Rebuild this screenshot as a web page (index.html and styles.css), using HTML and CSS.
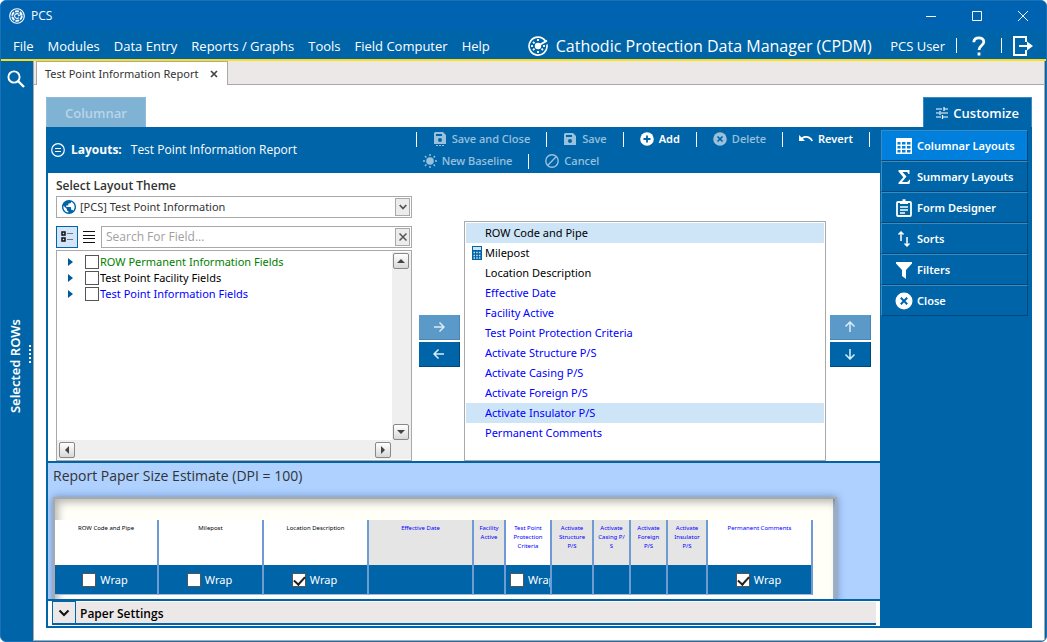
FILE: index.html
```html
<!DOCTYPE html>
<html lang="en">
<head>
  <meta charset="UTF-8">
  <meta name="viewport" content="width=device-width, initial-scale=1.0">
  <title>PCS</title>
  <link rel="stylesheet" href="styles.css">
</head>
<body>
  <div class="window">
    <header class="title-bar">
      <svg class="logo" viewBox="0 0 16 16" width="16" height="16" fill="none" stroke="#fff">
        <circle cx="8" cy="8" r="7.3" stroke-width="1.1"/>
        <circle cx="8" cy="8" r="4.8" stroke-width="1.9" stroke-dasharray="4 1"/>
        <path d="M9.8 6.4a2.4 2.4 0 1 0 0 3.2M9 8l4-2" stroke-width="1.1"/>
      </svg>
      <span class="title">PCS</span>
      <button class="win-btn" aria-label="Minimize"><svg viewBox="0 0 12 12" width="12" height="12" stroke="#fff" fill="none"><path d="M1 6.5h10"/></svg></button>
      <button class="win-btn" aria-label="Maximize"><svg viewBox="0 0 12 12" width="12" height="12" stroke="#fff" fill="none"><path d="M1.5 1.5h9v9h-9z"/></svg></button>
      <button class="win-btn" aria-label="Close window"><svg viewBox="0 0 12 12" width="12" height="12" stroke="#fff" fill="none"><path d="M1 1l10 10M11 1L1 11"/></svg></button>
    </header>

    <nav class="menu-bar">
      <a href="#">File</a>
      <a href="#">Modules</a>
      <a href="#">Data Entry</a>
      <a href="#">Reports / Graphs</a>
      <a href="#">Tools</a>
      <a href="#">Field Computer</a>
      <a href="#">Help</a>
      <div class="product">
        <svg viewBox="0 0 20 20" width="20" height="20" fill="none" stroke="#fff">
          <path d="M17.6 5.2A9 9 0 1 0 18.9 8.5" stroke-width="1.6"/>
          <circle cx="10" cy="10" r="3.2" fill="#fff" stroke="none"/>
          <path d="M11 9.2l8-4.6" stroke-width="1.8"/>
          <path d="M9 4h2M9 16h2M4 9v2M16 9v2M5 5.8l1.5 1.5M5 14.2l1.5-1.5M15 14.2l-1.5-1.5" stroke-width="1.8"/>
        </svg>
        <span>Cathodic Protection Data Manager (CPDM)</span>
      </div>
      <div class="user">
        <span>PCS User</span>
        <i class="bar"></i>
        <button class="icon-btn" aria-label="Help"><svg viewBox="0 0 14 20" width="14" height="20" fill="none" stroke="#fff" stroke-width="2.8"><path d="M1.8 6.2C1.8 3.4 4 1.8 6.8 1.8s5 1.6 5 4.2c0 3.4-4.8 3.8-4.8 8"/><path d="M7 16.6v3"/></svg></button>
        <i class="bar"></i>
        <button class="icon-btn" aria-label="Log out"><svg viewBox="0 0 20 20" width="20" height="20" fill="none" stroke="#fff" stroke-width="2"><path d="M13 6V1H1v18h12v-5"/><path d="M6 10h9"/><path d="M14 5.4v9.2l6-4.6z" fill="#fff" stroke="none"/></svg></button>
      </div>
    </nav>

    <div class="workspace">
      <aside class="rail">
        <button class="icon-btn" aria-label="Search"><svg viewBox="0 0 18 18" width="18" height="18" fill="none" stroke="#fff"><circle cx="7" cy="7" r="5.6" stroke-width="1.9"/><path d="M11 11l6 6" stroke-width="2.4"/></svg></button>
        <div class="rail-title">
          <span class="rail-label">Selected ROWs</span>
          <i class="grip"></i>
        </div>
      </aside>

      <main class="document">
        <div class="doc-tabs">
          <div class="doc-tab">
            <span>Test Point Information Report</span>
            <button class="icon-btn" aria-label="Close tab"><svg viewBox="0 0 8 8" width="8" height="8" fill="none" stroke="#444" stroke-width="1.7"><path d="M1 1l6 6M7 1L1 7"/></svg></button>
          </div>
        </div>

        <div class="page">
          <div class="page-tabs">
            <button class="page-tab" disabled>Columnar</button>
            <button class="page-tab active">
              <svg viewBox="0 0 12 12" width="12" height="12" fill="none" stroke="#fff" stroke-width="1.2"><path d="M0 2h6M8 2h4M8 0v4M0 6h3M5 6h7M4 4v4M0 10h5M7 10h5M6.5 8v4"/></svg>
              Customize
            </button>
          </div>

          <div class="panel">
            <div class="panel-main">
              <div class="toolbar">
                <div class="layout-name">
                  <svg viewBox="0 0 14 14" width="14" height="14" fill="none" stroke="#fff" stroke-width="1.2"><circle cx="7" cy="7" r="6.3"/><path d="M4 5.5h6M4 8.5h6"/></svg>
                  <b>Layouts:</b>
                  <span>Test Point Information Report</span>
                </div>
                <div class="actions">
                  <div class="action-row">
                    <i class="bar"></i>
                    <button disabled><svg viewBox="0 0 14 14" width="14" height="14"><path fill="#fff" fill-rule="evenodd" d="M2 0h8l3 3v9H1V1zM3 2v2h6V2zM7 6a2 2 0 1 0 0 4a2 2 0 1 0 0-4z"/><path stroke="#fff" stroke-dasharray="2 1" d="M3 13.5h8"/></svg>Save and Close</button>
                    <i class="bar"></i>
                    <button disabled><svg viewBox="0 0 14 14" width="14" height="14"><path fill="#fff" fill-rule="evenodd" d="M2 1h8l3 3v9H1V2zM3 3v2h6V3zM7 7a2 2 0 1 0 0 4a2 2 0 1 0 0-4z"/></svg>Save</button>
                    <i class="bar"></i>
                    <button><svg viewBox="0 0 14 14" width="14" height="14"><circle cx="7" cy="7" r="6.8" fill="#fff"/><path d="M7 3.5v7M3.5 7h7" stroke="#0064a8" stroke-width="1.8"/></svg>Add</button>
                    <i class="bar"></i>
                    <button disabled><svg viewBox="0 0 14 14" width="14" height="14"><circle cx="7" cy="7" r="6.8" fill="#fff"/><path d="M4.5 4.5l5 5M9.5 4.5l-5 5" stroke="#0064a8" stroke-width="1.7"/></svg>Delete</button>
                    <i class="bar"></i>
                    <button><svg viewBox="0 0 14 14" width="14" height="14"><path d="M0 3v6h6L3.8 6.8C6.5 4.8 10.5 5.6 12.6 9.5L14 8.5C11.5 4 6.5 2.8 2.7 5.6z" fill="#fff"/></svg>Revert</button>
                    <i class="bar"></i>
                  </div>
                  <div class="action-row second">
                    <button disabled><svg viewBox="0 0 14 14" width="14" height="14"><circle cx="7" cy="7" r="3.8" fill="#fff"/><path d="M7 0v2M7 12v2M0 7h2M12 7h2M2 2l1.4 1.4M10.6 10.6L12 12M12 2l-1.4 1.4M3.4 10.6L2 12" stroke="#fff" stroke-width="1.4"/></svg>New Baseline</button>
                    <i class="bar"></i>
                    <button disabled><svg viewBox="0 0 14 14" width="14" height="14" fill="none" stroke="#fff" stroke-width="1.4"><circle cx="7" cy="7" r="6.2"/><path d="M11.4 2.6l-8.8 8.8"/></svg>Cancel</button>
                  </div>
                </div>
              </div>

              <div class="fields">
                <div class="field-picker">
                  <label class="field-label" for="theme">Select Layout Theme</label>
                  <div class="combo">
                    <svg viewBox="2 2 20 20" width="14" height="14"><path fill="#0064a8" d="M12 2C6.48 2 2 6.48 2 12s4.48 10 10 10 10-4.48 10-10S17.52 2 12 2zm-1 17.93c-3.95-.49-7-3.85-7-7.93 0-.62.08-1.21.21-1.79L9 15v1c0 1.1.9 2 2 2v1.93zm6.9-2.54c-.26-.81-1-1.39-1.9-1.39h-1v-3c0-.55-.45-1-1-1H8v-2h2c.55 0 1-.45 1-1V7h2c1.1 0 2-.9 2-2v-.41c2.93 1.19 5 4.06 5 7.41 0 2.08-.8 3.97-2.1 5.39z"/></svg>
                    <select id="theme"><option>[PCS] Test Point Information</option></select>
                    <span class="combo-btn"><svg viewBox="0 0 8 6" width="8" height="6" fill="none" stroke="#555" stroke-width="1.8"><path d="M.7 1L4 4.5 7.3 1"/></svg></span>
                  </div>

                  <div class="search-row">
                    <button class="view-btn on" aria-label="Tree view"><svg viewBox="0 0 12 12" width="12" height="12" fill="none" stroke="#111"><path d="M1 1h3v3H1zM1 7h3v3H1z" stroke-width="1.5"/><path d="M6 2.5h6M6 8.5h6" stroke="#777" stroke-width="1.2"/></svg></button>
                    <button class="view-btn" aria-label="List view"><svg viewBox="0 0 12 12" width="12" height="12" stroke="#111"><path d="M0 .5h12M0 4.5h12M0 7.5h12M0 11.5h12"/></svg></button>
                    <div class="search">
                      <input type="text" placeholder="Search For Field..." aria-label="Search For Field">
                      <button class="clear-btn" aria-label="Clear"><svg viewBox="0 0 8 8" width="8" height="8" fill="none" stroke="#555" stroke-width="1.5"><path d="M.5.5l7 7M7.5.5l-7 7"/></svg></button>
                    </div>
                  </div>

                  <div class="tree">
                    <ul>
                      <li class="green"><i class="twisty"></i><label><input type="checkbox">ROW Permanent Information Fields</label></li>
                      <li><i class="twisty"></i><label><input type="checkbox">Test Point Facility Fields</label></li>
                      <li class="blue"><i class="twisty"></i><label><input type="checkbox">Test Point Information Fields</label></li>
                    </ul>
                    <div class="scroll-y">
                      <button class="scroll-btn up" aria-label="Scroll up"></button>
                      <button class="scroll-btn down" aria-label="Scroll down"></button>
                    </div>
                    <div class="scroll-x">
                      <button class="scroll-btn left" aria-label="Scroll left"></button>
                      <button class="scroll-btn right" aria-label="Scroll right"></button>
                    </div>
                  </div>
                </div>

                <div class="movers">
                  <button class="mover" disabled aria-label="Add field"><svg viewBox="0 0 12 12" width="12" height="12"><path d="M1 6h10M6.5 1.5L11 6l-4.5 4.5"/></svg></button>
                  <button class="mover" aria-label="Remove field"><svg viewBox="0 0 12 12" width="12" height="12"><path d="M11 6H1M5.5 1.5L1 6l4.5 4.5"/></svg></button>
                </div>

                <ul class="chosen">
                  <li class="selected">ROW Code and Pipe</li>
                  <li><svg viewBox="0 0 10 14" width="10" height="14"><path fill="#0064a8" d="M0 0h10v14H0z"/><path fill="#cfe4f6" d="M1 1h8v3H1z"/><path d="M1.5 6.5h7M1.5 9.5h7M1.5 12h7" stroke="#cfe4f6" stroke-width="1.5" stroke-dasharray="1.5 1.2"/></svg>Milepost</li>
                  <li>Location Description</li>
                  <li class="blue">Effective Date</li>
                  <li class="blue">Facility Active</li>
                  <li class="blue">Test Point Protection Criteria</li>
                  <li class="blue">Activate Structure P/S</li>
                  <li class="blue">Activate Casing P/S</li>
                  <li class="blue">Activate Foreign P/S</li>
                  <li class="blue selected">Activate Insulator P/S</li>
                  <li class="blue">Permanent Comments</li>
                </ul>

                <div class="movers">
                  <button class="mover" disabled aria-label="Move up"><svg viewBox="0 0 12 12" width="12" height="12"><path d="M6 11V1M1.5 5.5L6 1l4.5 4.5"/></svg></button>
                  <button class="mover" aria-label="Move down"><svg viewBox="0 0 12 12" width="12" height="12"><path d="M6 1v10M1.5 6.5L6 11l4.5-4.5"/></svg></button>
                </div>
              </div>

              <section class="estimate">
                <h2>Report Paper Size Estimate (DPI = 100)</h2>
                <div class="paper">
                  <table>
                    <colgroup>
                      <col style="width:104px"><col style="width:105px"><col style="width:105px"><col style="width:105px"><col style="width:32px"><col style="width:46px"><col style="width:42px"><col style="width:37px"><col style="width:37px"><col style="width:40px"><col style="width:105px">
                    </colgroup>
                    <thead>
                      <tr>
                        <th>ROW Code and Pipe</th>
                        <th>Milepost</th>
                        <th>Location Description</th>
                        <th class="blue off">Effective Date</th>
                        <th class="blue off">Facility Active</th>
                        <th class="blue">Test Point Protection Criteria</th>
                        <th class="blue off">Activate Structure P/S</th>
                        <th class="blue off">Activate Casing P/<br>S</th>
                        <th class="blue off">Activate Foreign P/S</th>
                        <th class="blue off">Activate Insulator P/S</th>
                        <th class="blue">Permanent Comments</th>
                      </tr>
                    </thead>
                    <tbody>
                      <tr>
                        <td><label><input type="checkbox">Wrap</label></td>
                        <td><label><input type="checkbox">Wrap</label></td>
                        <td><label><input type="checkbox" checked>Wrap</label></td>
                        <td></td>
                        <td></td>
                        <td class="tight"><label><input type="checkbox">Wrap</label></td>
                        <td></td>
                        <td></td>
                        <td></td>
                        <td></td>
                        <td><label><input type="checkbox" checked>Wrap</label></td>
                      </tr>
                    </tbody>
                  </table>
                </div>
              </section>

              <div class="settings">
                <div class="settings-head">
                  <button aria-label="Expand Paper Settings"><svg viewBox="0 0 12 8" width="12" height="8" fill="none" stroke="#111" stroke-width="2"><path d="M1.5 1.5L6 6l4.5-4.5"/></svg></button>
                  <b>Paper Settings</b>
                </div>
              </div>
            </div>

            <nav class="side">
              <button class="active"><svg viewBox="0 0 18 18" width="18" height="18"><path fill="#fff" fill-rule="evenodd" d="M1 1h16v16H1zM2.5 5v2.5h3V5zM7 5v2.5h3.5V5zM12 5v2.5h3.5V5zM2.5 9v2.5h3V9zM7 9v2.5h3.5V9zM12 9v2.5h3.5V9zM2.5 13v2.5h3V13zM7 13v2.5h3.5V13zM12 13v2.5h3.5V13z"/></svg>Columnar Layouts</button>
              <button><svg viewBox="0 0 18 18" width="18" height="18" fill="#fff"><path d="M3.5 2h11v4h-1.2c-.3-1.5-.8-2-2.3-2H7.5l4 4.6L7 14h4.5c1.5 0 2.2-.6 2.6-2.2h1.1L14.5 16h-11v-1.2L8.3 9.3 3.5 3.5z"/></svg>Summary Layouts</button>
              <button><svg viewBox="0 0 18 18" width="18" height="18" fill="none" stroke="#fff"><rect x="2" y="3" width="14" height="14" rx="1" stroke-width="1.8"/><path d="M5 2.5h8V5H5z" fill="#fff" stroke="none"/><path d="M7.5 1.2h3" stroke-width="2"/><path d="M5 8h8M5 11h8M5 14h5" stroke-width="1.5"/></svg>Form Designer</button>
              <button><svg viewBox="0 0 18 18" width="18" height="18" fill="none" stroke="#fff" stroke-width="1.5"><path d="M6 11V2M3.5 4.5L6 2l2.5 2.5M12 7v9M9.5 13.5L12 16l2.5-2.5"/></svg>Sorts</button>
              <button><svg viewBox="0 0 18 18" width="18" height="18"><path fill="#fff" d="M1 1h16v1.5L11 9v9l-4-3V9L1 2.5z"/></svg>Filters</button>
              <button><svg viewBox="0 0 18 18" width="18" height="18"><circle cx="9" cy="9" r="8.5" fill="#fff"/><path d="M5.8 5.8l6.4 6.4M12.2 5.8l-6.4 6.4" stroke="#0064a8" stroke-width="2"/></svg>Close</button>
            </nav>
          </div>
        </div>
      </main>
    </div>
  </div>
</body>
</html>
```

FILE: styles.css
```css
* {
  box-sizing: border-box;
}

body {
  margin: 0;
  background: #fff;
  font-family: "Noto Sans", "Open Sans", sans-serif;
  font-size: 11px;
  line-height: 16px;
  color: #000;
}

button, input, select {
  font: inherit;
  color: inherit;
  margin: 0;
}

button {
  display: flex;
  align-items: center;
  border: none;
  padding: 0;
  background: none;
  white-space: nowrap;
}

svg {
  display: block;
  flex: none;
}

ul {
  list-style: none;
  margin: 0;
  padding: 0;
}

.blue { color: #0000ff; }
.green { color: #008000; }

.window {
  display: flex;
  flex-direction: column;
  min-height: 100vh;
  border: 1px solid #1a70b5;
  border-radius: 6px;
  background: #0064a8;
  overflow: hidden;
}

/* title bar */
.title-bar {
  display: flex;
  align-items: center;
  height: 29px;
  padding-left: 8px;
  background: #0063b1;
  color: #fff;
  font-family: "Open Sans", sans-serif;
  font-size: 12px;
}

.title {
  flex: 1;
  margin-left: 6px;
}

.win-btn {
  justify-content: center;
  width: 46px;
  height: 29px;
}

/* menu */
.menu-bar {
  display: flex;
  align-items: center;
  gap: 14px;
  height: 31px;
  padding: 2px 13px 0 12px;
  border-bottom: 2px solid #ffde17;
  font-family: "Open Sans", sans-serif;
  font-size: 13px;
  color: #fff;
  white-space: nowrap;
}

.menu-bar a {
  color: #fff;
  text-decoration: none;
}

.product {
  display: flex;
  align-items: center;
  gap: 8px;
  margin: 0 auto 0 24px;
  font-size: 16px;
}

.user {
  display: flex;
  align-items: center;
  gap: 11px;
}

.bar {
  width: 1px;
  height: 15px;
  background: #fff;
}

.user .icon-btn {
  margin: 0 4px;
}

.user .icon-btn:last-child {
  margin: 0;
}

/* left rail */
.workspace {
  display: flex;
  flex: 1;
}

.rail {
  display: flex;
  flex-direction: column;
  width: 32px;
  padding: 9px 2px 0 6px;
}

.rail-title {
  display: flex;
  flex: 1;
  align-items: center;
  justify-content: space-between;
}

.rail-label {
  writing-mode: vertical-rl;
  transform: rotate(180deg);
  margin-top: 4px;
  color: #fff;
  font-size: 13px;
  font-weight: 600;
  white-space: nowrap;
}

.grip {
  width: 2px;
  height: 18px;
  margin-bottom: 22px;
  background: repeating-linear-gradient(#fff 0 2px, transparent 2px 4px);
}

/* document */
.document {
  display: flex;
  flex-direction: column;
  flex: 1;
  min-width: 0;
  margin: 0 1px 0 0;
  border-left: 1px solid #a9a9a9;
  border-right: 1px solid #a9a9a9;
  border-bottom: 1px solid #a9a9a9;
  background: #fff;
}

.doc-tabs {
  display: flex;
  height: 24px;
  padding-left: 2px;
  background: linear-gradient(#a9a9a9, #a9a9a9) bottom / 100% 1px no-repeat #ece8e8;
}

.doc-tab {
  display: flex;
  align-items: center;
  gap: 11px;
  padding: 0 9px 0 8px;
  border: 1px solid #a9a9a9;
  border-bottom: none;
  background: #fff;
  color: #333;
}

.page {
  display: flex;
  flex-direction: column;
  flex: 1;
  padding: 12px 12px;
}

.page-tabs {
  display: flex;
  justify-content: space-between;
}

.page-tab {
  justify-content: center;
  gap: 5px;
  height: 30px;
  padding: 0 18px;
  background: #80b2d4;
  border: 1px solid #8fbbd9;
  border-bottom: none;
  color: #b9d5e8;
  font-family: "Open Sans", sans-serif;
  font-size: 13px;
  font-weight: 600;
}

.page-tab.active {
  padding: 0 12px;
  background: #0064a8;
  border-color: #3b8ac0;
  color: #fff;
}

.panel {
  display: flex;
  flex: 1;
  border-left: 2px solid #0064a8;
  border-bottom: 2px solid #0064a8;
  background: #0064a8;
}

.panel-main {
  display: flex;
  flex-direction: column;
  flex: 1;
  min-width: 0;
  background: #fff;
}

/* layout toolbar */
.toolbar {
  display: flex;
  align-items: center;
  justify-content: space-between;
  height: 46px;
  padding: 0 10px 0 3px;
  background: #0064a8;
  color: #fff;
}

.layout-name {
  display: flex;
  align-items: center;
  gap: 6px;
  font-family: "Open Sans", sans-serif;
  font-size: 12px;
}

.layout-name span {
  margin-left: 3px;
}

.action-row {
  display: flex;
  align-items: center;
  gap: 16px;
  height: 22px;
}

.action-row.second {
  padding-left: 7px;
}

.action-row button {
  gap: 5px;
  font-weight: 600;
}

.action-row button:disabled {
  color: #fff;
  opacity: 0.6;
  font-weight: 500;
}

/* field picker */
.fields {
  display: grid;
  grid-template-columns: 359fr 41px 362fr 41px;
  gap: 4px;
  flex: 1;
  padding: 0 9px 0 8px;
}

.field-picker {
  display: flex;
  flex-direction: column;
  margin-right: 3px;
}

.field-label {
  padding: 5px 0 2px;
  color: #333;
  font-family: "Open Sans", sans-serif;
  font-size: 12px;
  font-weight: 600;
}

.combo {
  display: flex;
  align-items: center;
  height: 22px;
  padding: 1px 1px 1px 5px;
  border: 1px solid #a9a9a9;
}

.combo select {
  flex: 1;
  padding: 0 4px;
  border: none;
  background: none;
  appearance: none;
  color: #333;
}

.combo-btn, .clear-btn {
  display: flex;
  align-items: center;
  justify-content: center;
  width: 15px;
  height: 18px;
  border: 1px solid #a9a9a9;
  background: #ececec;
}

.search-row {
  display: flex;
  margin: 8px 0 2px;
}

.view-btn {
  justify-content: center;
  width: 22px;
  height: 22px;
}

.view-btn.on {
  border: 1px solid #0064a8;
  background: #d4e5fb;
}

.search {
  display: flex;
  flex: 1;
  margin-left: 1px;
  padding: 1px;
  border: 1px solid #a9a9a9;
}

.search input {
  flex: 1;
  min-width: 0;
  padding: 0 3px;
  border: none;
  font-family: "Open Sans", sans-serif;
  font-size: 12px;
}

.search input::placeholder {
  color: #a0a0a0;
}

.tree {
  display: grid;
  grid-template-columns: 1fr 19px;
  grid-template-rows: 1fr 19px;
  flex: 1;
  border: 1px solid #a9a9a9;
  padding: 1px 0;
}

.tree ul {
  padding: 2px 0 0 11px;
}

.tree li, .tree label {
  display: flex;
  align-items: center;
  height: 16px;
}

.tree li {
  gap: 12px;
}

.tree label {
  gap: 1px;
}

.twisty {
  border: 4px solid transparent;
  border-left: 5px solid #005a9a;
  border-right: none;
}

input[type="checkbox"] {
  appearance: none;
  flex: none;
  width: 14px;
  height: 14px;
  border: 1px solid #555;
  background: #fff;
}

.scroll-y, .scroll-x {
  display: flex;
  justify-content: space-between;
  background: #efefef;
  padding: 2px;
}

.scroll-y {
  flex-direction: column;
  padding: 1px 2px 0 1px;
}

.scroll-x {
  grid-column: 1 / 3;
  align-items: center;
  padding-right: 20px;
}

.scroll-btn {
  justify-content: center;
  width: 16px;
  height: 16px;
  border: 1px solid #888;
  border-radius: 2px;
  background: linear-gradient(#fff, #d8d8d8);
}

.scroll-btn::after {
  content: "";
  border: 4px solid transparent;
}

.up::after { border-bottom-color: #444; border-top: none; }
.down::after { border-top-color: #444; border-bottom: none; }
.left::after { border-right-color: #444; border-left: none; }
.right::after { border-left-color: #444; border-right: none; }

.movers {
  display: flex;
  flex-direction: column;
  gap: 2px;
  padding-top: 142px;
}

.mover {
  justify-content: center;
  height: 25px;
  border-right: 1px solid #00487a;
  border-bottom: 1px solid #00487a;
  background: #0064a8;
}

.mover:disabled {
  background: #5b9ac8;
  border-color: #4a86b2;
}

.mover svg {
  fill: none;
  stroke: #dcecf8;
  stroke-width: 1.5;
}

.chosen {
  margin-top: 48px;
  padding: 1px;
  border: 1px solid #a9a9a9;
}

.chosen li {
  display: flex;
  align-items: center;
  height: 20px;
  padding-left: 19px;
}

.chosen svg {
  margin: 0 3px 0 -13px;
}

.chosen .selected {
  background: #cee4f7;
}

/* paper estimate */
.estimate {
  height: 140px;
  padding: 4px 5px 0;
  border-top: 2px solid #0064a8;
  border-bottom: 2px solid #0064a8;
  background: #aed1ff;
  overflow: hidden;
}

.estimate h2 {
  margin: 0 0 12px;
  font-family: "Open Sans", sans-serif;
  font-size: 14px;
  line-height: 18px;
  font-weight: 400;
  color: #333;
}

.paper {
  width: 784px;
  height: 120px;
  padding-top: 21px;
  border: 2px solid #a9a9a9;
  background: #fffff8;
  box-shadow: inset 3px 3px 8px rgba(0, 0, 0, 0.3), inset -2px 0 #9dbbe4, 0 0 8px rgba(0, 30, 90, 0.4);
}

.paper table {
  width: 758px;
  table-layout: fixed;
  border-collapse: separate;
  border-spacing: 0;
}

.paper th, .paper td {
  border-right: 2px solid #6f9bd3;
  overflow: hidden;
}

.paper th {
  height: 45px;
  padding: 4px 3px;
  vertical-align: top;
  background: #fff;
  font-size: 6px;
  line-height: 9px;
  font-weight: 400;
}

.paper th.off {
  background: #e5e5e5;
}

.paper td {
  height: 30px;
  padding: 0;
  border-bottom: 1px solid #9dbbe4;
  background: #0064a8;
  color: #fff;
}

.paper label {
  display: flex;
  align-items: center;
  justify-content: center;
  gap: 4px;
  padding-right: 2px;
}

.paper .tight label {
  justify-content: flex-start;
  padding-left: 4px;
}

.paper input:checked::after {
  content: "";
  display: block;
  width: 10px;
  height: 5px;
  margin: 2px 0 0 1px;
  border-left: 2px solid #222;
  border-bottom: 2px solid #222;
  transform: rotate(-48deg);
}

.paper input:checked {
  display: flex;
  align-items: flex-start;
}

/* paper settings */
.settings {
  padding: 1px 4px;
}

.settings-head {
  display: flex;
  align-items: center;
  gap: 4px;
  height: 23px;
  border-bottom: 2px solid #0064a8;
  background: #ece8e8;
}

.settings-head button {
  justify-content: center;
  width: 24px;
  height: 23px;
  border: 1px solid #0064a8;
}

.settings-head b {
  padding-top: 3px;
  font-family: "Open Sans", sans-serif;
  font-size: 12px;
  font-weight: 600;
}

/* side menu */
.side {
  flex: none;
  width: 152px;
  padding: 3px 4px 0 1px;
}

.side button {
  gap: 4px;
  width: 100%;
  height: 31px;
  padding-left: 13px;
  border: 1px solid #3b8ac0;
  border-right-color: #00487a;
  border-bottom-color: #00487a;
  background: #0064a8;
  color: #fff;
  font-weight: 600;
}

.side button.active {
  background: #0080dc;
}
```
